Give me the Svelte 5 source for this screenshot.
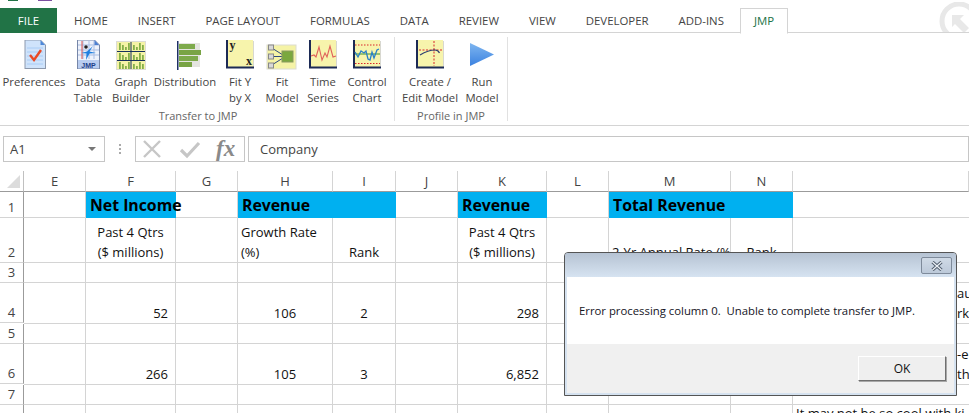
<script>
  const tabs = ['HOME', 'INSERT', 'PAGE LAYOUT', 'FORMULAS', 'DATA', 'REVIEW', 'VIEW', 'DEVELOPER', 'ADD-INS'];

  const columns = ['E', 'F', 'G', 'H', 'I', 'J', 'K', 'L', 'M', 'N', 'O'];

  const transfer = [
    { lines: ['Preferences'], icon: prefs, w: 64 },
    { lines: ['Data', 'Table'], icon: dataTable, w: 44 },
    { lines: ['Graph', 'Builder'], icon: graph, w: 42 },
    { lines: ['Distribution'], icon: dist, w: 66 },
    { lines: ['Fit Y', 'by X'], icon: fitY, w: 44 },
    { lines: ['Fit', 'Model'], icon: fitModel, w: 40 },
    { lines: ['Time', 'Series'], icon: timeSeries, w: 42 },
    { lines: ['Control', 'Chart'], icon: control, w: 46 }
  ];
  const profile = [
    { lines: ['Create /', 'Edit Model'], icon: profiler, w: 70 },
    { lines: ['Run', 'Model'], icon: run, w: 34 }
  ];

  // one entry per sheet row, cells keyed by column letter
  const rows = [
    { n: 1, h: 26, cells: { F: { t: 'Net Income', head: 1 }, H: { t: 'Revenue', head: 1, span: 2 }, K: { t: 'Revenue', head: 1 }, M: { t: 'Total Revenue', head: 1, span: 2 } } },
    {
      n: 2, h: 45, cells: {
        F: { t: ['Past 4 Qtrs', '($ millions)'], c: 1 },
        H: { t: ['Growth Rate', '(%)'] },
        I: { t: 'Rank', c: 1 },
        K: { t: ['Past 4 Qtrs', '($ millions)'], c: 1 },
        M: { t: '2-Yr Annual Rate (%)', clip: 1 },
        N: { t: 'Rank', c: 1 }
      }
    },
    { n: 3, h: 20, cells: {} },
    {
      n: 4, h: 40, cells: {
        F: { t: '52', r: 1 }, H: { t: '106', c: 1 }, I: { t: '2', c: 1 }, K: { t: '298', r: 1 },
        O: { t: ['au', 'rk'], frag: 1 }
      }
    },
    { n: 5, h: 20, cells: {} },
    {
      n: 6, h: 40, cells: {
        F: { t: '266', r: 1 }, H: { t: '105', c: 1 }, I: { t: '3', c: 1 }, K: { t: '6,852', r: 1 },
        O: { t: ['-e', 'th'], frag: 1 }
      }
    },
    { n: 7, h: 20, cells: {} },
    { n: 8, h: 40, cells: { O: { t: 'It may not be so cool with ki', top: 1 } } }
  ];

  function hidden(row, col) {
    // columns swallowed by a merged cell on the left
    const i = columns.indexOf(col);
    return i > 0 && row.cells[columns[i - 1]]?.span === 2;
  }
</script>

{#snippet panel()}
  <rect x="3" y="3" width="27" height="27" fill="#d8d8d0" />
  <rect x="3" y="2" width="26" height="27" fill="#f7f4ac" />
  <rect x="2" y="2" width="2" height="28" fill="#1c2a55" />
  <rect x="2" y="28.5" width="28" height="2" fill="#1c2a55" />
{/snippet}

{#snippet prefs()}
  <path d="M6.5 2H23l5 5v24H6.5z" fill="#8d99ad" />
  <path d="M7.5 2.500H22.500l4.500 4.500v23H7.500z" fill="#cfe3fb" />
  <path d="M22.500 2v5H27z" fill="#4d88d8" />
  <path d="M9 10h16M9 14h16M9 18h16M9 22h16M9 26h16" stroke="#a9ccf5" stroke-width="1" />
  <path d="M12 17l4 5 7-10" fill="none" stroke="#ea4a26" stroke-width="2.400" />
{/snippet}

{#snippet dataTable()}
  <path d="M5 2H23l5 5v24H5z" fill="#7686a8" />
  <path d="M6 2.500H22.500l4.500 4.500v23H6z" fill="#eef2fb" />
  <path d="M6 7h21M6 12h21M6 17h21M11 3v18M17 3v18M22 3v18" stroke="#a9bde3" stroke-width="1" />
  <path d="M10 3v18" stroke="#e0524a" stroke-width="1" />
  <rect x="6" y="22" width="21" height="8.500" fill="#b9cdf0" />
  <path d="M22.500 2v5H27z" fill="#4d7fd0" />
  <circle cx="14" cy="9" r="1.800" fill="#222" />
  <path d="M21 8l-3.500 5.500L24 15l-6.500 .5L14 22l.5-6.500L9 15l6-1.500z" fill="#1f7fe0" />
  <text x="16.500" y="29.500" text-anchor="middle" class="jmp">JMP</text>
{/snippet}

{#snippet graph()}
  <rect x="1" y="3" width="30" height="29" fill="#dcdcd6" />
  <rect x="2" y="4" width="28" height="27" fill="#f5f3a6" />
  {#each [5, 15, 24] as y}
    {#each [4, 7, 10, 13, 18, 21, 24, 27] as x, i}
      <rect x={x} y={y + (i % 3) * 2} width="1.800" height={7 - (i % 3) * 2} fill="#86b04a" />
    {/each}
  {/each}
  <path d="M2 13.500h28M2 22.500h28M16 4v27" stroke="#17305c" stroke-width="1" />
{/snippet}

{#snippet dist()}
  <rect x="10" y="5" width="21" height="24" fill="#e4e4e0" />
  <rect x="8" y="3" width="1.500" height="29" fill="#1d2f66" />
  <rect x="10" y="6" width="16" height="5" fill="#7eaa4c" />
  <rect x="10" y="12" width="24" height="5" fill="#79a445" />
  <rect x="10" y="18" width="19" height="5" fill="#7eaa4c" />
  <rect x="10" y="24" width="13" height="5" fill="#79a445" />
{/snippet}

{#snippet fitY()}
  {@render panel()}
  <text x="5.500" y="11" class="axis">y</text>
  <text x="22" y="27" class="axis">x</text>
{/snippet}

{#snippet fitModel()}
  <rect x="1" y="7" width="29" height="24" fill="#f5f3a6" stroke="#dcdcd0" />
  <path d="M5 9.500L17 17M5 18.500H17M5 27.500L17 20" stroke="#2e4a80" stroke-width="1" />
  <rect x="16" y="13" width="11" height="11" fill="#7aa83e" stroke="#8a9a60" />
  <rect x="2.500" y="7" width="5" height="5" fill="#d8d8d8" stroke="#888" />
  <rect x="2.500" y="16" width="5" height="5" fill="#d8d8d8" stroke="#888" />
  <rect x="2.500" y="25" width="5" height="5" fill="#d8d8d8" stroke="#888" />
{/snippet}

{#snippet timeSeries()}
  {@render panel()}
  <path d="M4 18l3-1 2 2 3-10 3 13 3-7 2 4 3-11 3 11 3-1" fill="none" stroke="#e0605a" stroke-width="1.100" />
{/snippet}

{#snippet control()}
  {@render panel()}
  <path d="M4 7h25M4 25.500h25" stroke="#d8262c" stroke-width="1" stroke-dasharray="1.500 1.500" />
  <path d="M4 16h25" stroke="#3d9132" stroke-width="1" />
  <path d="M4 14l3 5 3-6 3 2 2-2 2 8 2 1 2-8 2 6 3-8 2-1" fill="none" stroke="#2a80c8" stroke-width="1.300" />
{/snippet}

{#snippet profiler()}
  {@render panel()}
  <path d="M5 12h24" stroke="#d8262c" stroke-width="1" stroke-dasharray="2 1.500" />
  <path d="M20 3v25" stroke="#d8262c" stroke-width="1" stroke-dasharray="2 1.500" />
  <path d="M6 17c5-3 11-5 15-5 3 0 3.500 1 4.500 3" fill="none" stroke="#2e3f70" stroke-width="1.200" />
{/snippet}

{#snippet run()}
  <defs>
    <linearGradient id="runFill" x1="0" y1="0" x2="0" y2="1">
      <stop offset="0" stop-color="#7fb6f0" />
      <stop offset="1" stop-color="#3b82e0" />
    </linearGradient>
  </defs>
  <path d="M4 5l24 11.500L4 28z" fill="url(#runFill)" />
{/snippet}

{#snippet ribbonButton(b)}
  <div class="rbtn" style="width: {b.w}px">
    <svg viewBox="0 0 32 32" width="32" height="32">{@render b.icon()}</svg>
    {#each b.lines as line}
      <span>{line}</span>
    {/each}
  </div>
{/snippet}

<div class="window">
  <div class="titlebar">
    <i class="qa-green"></i>
    <i class="qa-purple"></i>
  </div>

  <div class="tabs">
    <div class="tab file">FILE</div>
    {#each tabs as tab}
      <div class="tab">{tab}</div>
    {/each}
    <div class="tab active">JMP</div>
    <svg class="signin" viewBox="0 0 32 30" width="32" height="30">
      <circle cx="22" cy="19" r="17" fill="none" stroke="#e8e8e8" stroke-width="5" />
      <path d="M15 13h12l-4 4 9 9-5 5-9-9-3 3z" fill="#e8e8e8" />
    </svg>
  </div>

  <div class="ribbon">
    <div class="group">
      <div class="buttons first">
        {#each transfer as b}
          {@render ribbonButton(b)}
        {/each}
      </div>
      <div class="group-label">Transfer to JMP</div>
    </div>
    <div class="group">
      <div class="buttons">
        {#each profile as b}
          {@render ribbonButton(b)}
        {/each}
      </div>
      <div class="group-label">Profile in JMP</div>
    </div>
  </div>

  <div class="formula">
    <div class="namebox">
      <span>A1</span>
      <i class="arrow"></i>
    </div>
    <div class="grip"></div>
    <div class="fxbox">
      <svg viewBox="0 0 20 20" width="20" height="20"><path d="M2 2l16 16M18 2L2 18" stroke="#c6c6c6" stroke-width="2.400" fill="none" /></svg>
      <svg viewBox="0 0 22 20" width="22" height="20"><path d="M2 11l6 6L20 4" stroke="#c6c6c6" stroke-width="3.200" fill="none" /></svg>
      <span class="fx">fx</span>
    </div>
    <div class="input">Company</div>
  </div>

  <div class="sheet">
    <div class="corner"><i></i></div>
    {#each columns as col}
      <div class="colhead">{col === 'O' ? '' : col}</div>
    {/each}

    {#each rows as row}
      <div class="rowhead" style="height: {row.h}px">{row.n}</div>
      {#each columns as col}
        {#if !hidden(row, col)}
          {@const cell = row.cells[col]}
          <div
            class="cell"
            class:head={cell?.head}
            class:center={cell?.c}
            class:right={cell?.r}
            class:clip={cell?.clip}
            class:frag={cell?.frag}
            class:top={cell?.top}
            class:noline={col === 'O'}
            style={cell?.span ? 'grid-column: span 2' : ''}
          >
            {#if cell}
              <div class="inner">
                {#each [cell.t].flat() as line}
                  <div>{line}</div>
                {/each}
              </div>
            {/if}
          </div>
        {/if}
      {/each}
    {/each}
  </div>

  <div class="dialog">
    <div class="dialog-title">
      <button class="close" aria-label="Close">
        <svg viewBox="0 0 12 10" width="12" height="10">
          <path d="M1.500 1l9 8M10.500 1l-9 8" stroke="#4f5c6c" stroke-width="3.200" />
          <path d="M1.500 1l9 8M10.500 1l-9 8" stroke="#eef3f8" stroke-width="1.200" />
        </svg>
      </button>
    </div>
    <div class="dialog-body">Error processing column 0.&nbsp; Unable to complete transfer to JMP.</div>
    <div class="dialog-foot">
      <button class="ok">OK</button>
    </div>
  </div>
</div>

<style>
  :global(body) {
    margin: 0;
    background: #fff;
    font-family: "Open Sans", "Noto Sans", sans-serif;
    overflow: hidden;
  }

  .window {
    position: relative;
    width: 969px;
    height: 413px;
    overflow: hidden;
    color: #444;
  }

  .titlebar {
    height: 8px;
    display: flex;
  }

  .qa-green {
    width: 10px;
    height: 1px;
    margin-left: 8px;
    background: #217346;
  }

  .qa-purple {
    width: 14px;
    height: 1px;
    margin-left: 20px;
    background: #7b4fa0;
  }

  .tabs {
    display: flex;
    height: 24px;
    border-bottom: 1px solid #d4d4d4;
    position: relative;
  }

  .tab {
    padding: 0 15px;
    font-size: 11.4px;
    line-height: 25px;
    color: #444;
    white-space: nowrap;
  }

  .tab.file {
    width: 57px;
    box-sizing: border-box;
    padding: 0;
    margin-right: 2px;
    height: 25px;
    text-align: center;
    background: #217346;
    color: #fff;
  }

  .tab.active {
    height: 24px;
    margin-left: 1px;
    color: #217346;
    background: #fff;
    border: 1px solid #d4d4d4;
    border-bottom: 1px solid #fff;
    padding: 0 13px;
    line-height: 24px;
  }

  .signin {
    position: absolute;
    right: 0;
    top: -6px;
  }

  .ribbon {
    display: flex;
    height: 92px;
    padding-left: 2px;
    border-bottom: 1px solid #d4d4d4;
  }

  .group {
    display: flex;
    flex-direction: column;
    align-items: center;
    border-right: 1px solid #e1e1e1;
    height: 84px;
    margin-top: 4px;
  }

  .buttons {
    display: flex;
    flex: none;
  }

  .buttons.first {
    padding-right: 4px;
  }

  .buttons:not(.first) {
    padding-right: 8px;
  }

  .rbtn {
    display: flex;
    flex-direction: column;
    align-items: center;
    font-size: 11.3px;
    line-height: 16px;
    color: #444;
    white-space: nowrap;
  }

  .rbtn svg {
    margin-top: 1px;
    margin-bottom: 4px;
    flex: none;
  }

  .group-label {
    font-size: 11px;
    line-height: 16px;
    color: #666;
    margin-top: 2px;
  }

  .jmp {
    font: bold 7px "Liberation Sans", sans-serif;
    fill: #1d3f8a;
  }

  .axis {
    font: bold 12px "Liberation Serif", serif;
    fill: #222;
  }

  .formula {
    display: flex;
    height: 26px;
    margin-top: 10px;
    padding-left: 3px;
  }

  .namebox,
  .fxbox,
  .input {
    box-sizing: border-box;
    border: 1px solid #c6c6c6;
    height: 26px;
    display: flex;
    align-items: center;
    font-size: 13px;
    color: #444;
  }

  .namebox {
    width: 102px;
    padding: 0 5px 0 6px;
    justify-content: space-between;
  }

  .arrow {
    width: 0;
    height: 0;
    border: 4px solid transparent;
    border-top: 4px solid #777;
    border-bottom: 0;
    margin-right: 3px;
  }

  .grip {
    width: 2px;
    height: 10px;
    margin: 8px 14px 0 14px;
    background: repeating-linear-gradient(#aaa 0 2px, transparent 2px 4px);
  }

  .fxbox {
    width: 110px;
    padding-left: 6px;
    gap: 17px;
  }

  .fxbox svg {
    flex: none;
  }

  .fx {
    font: italic bold 23px "Liberation Serif", serif;
    color: #8a8a8a;
    line-height: 20px;
    margin-left: -2px;
  }

  .input {
    flex: 1;
    margin-left: 3px;
    padding-left: 11px;
  }

  .sheet {
    display: grid;
    grid-template-columns: 24px 62px 90px 62px 95px 63px 62px 89px 62px 122px 62px 176px;
    margin-top: 9px;
    font-size: 13px;
    color: #111;
  }

  .corner {
    height: 20px;
    border-bottom: 1px solid #9b9b9b;
    border-right: 1px solid #c0c0c0;
    position: relative;
    width: 23px;
  }

  .corner i {
    position: absolute;
    left: 7px;
    bottom: 3px;
    width: 0;
    height: 0;
    border-left: 13px solid transparent;
    border-bottom: 13px solid #dcdcdc;
  }

  .colhead {
    height: 20px;
    line-height: 20px;
    text-align: center;
    color: #444;
    border-right: 1px solid #d4d4d4;
    border-bottom: 1px solid #9b9b9b;
  }

  .rowhead {
    box-sizing: border-box;
    border-right: 1px solid #9b9b9b;
    border-bottom: 1px solid #d4d4d4;
    color: #444;
    text-align: center;
    display: flex;
    align-items: flex-end;
    justify-content: center;
    line-height: 20px;
  }

  .cell {
    box-sizing: border-box;
    min-width: 0;
    border-right: 1px solid #d4d4d4;
    border-bottom: 1px solid #d4d4d4;
    display: flex;
    align-items: flex-end;
    line-height: 20px;
    padding: 0 3px;
    white-space: nowrap;
  }

  .cell .inner {
    width: 100%;
  }

  .cell.noline {
    border-right: 0;
  }

  .cell.head {
    background: #00b0f0;
    font-size: 15.8px;
    font-weight: 700;
    color: #000;
    border: 0;
    line-height: 25px;
    padding-left: 4px;
    position: relative;
  }

  .center {
    text-align: center;
  }

  .right {
    text-align: right;
    padding-right: 7px;
  }

  .clip {
    overflow: hidden;
  }

  .frag {
    padding-left: 164px;
    padding-right: 0;
  }

  .top {
    align-items: flex-start;
    border-bottom: 0;
  }

  .top .inner {
    margin-top: -2px;
  }

  .dialog {
    position: absolute;
    left: 564px;
    top: 252px;
    width: 393px;
    height: 144px;
    box-sizing: border-box;
    border: 1px solid #555;
    border-radius: 4px 4px 0 0;
    background: #d5e2f0;
    padding: 0 2px 2px;
    display: flex;
    flex-direction: column;
  }

  .dialog-title {
    height: 24px;
    margin: 0 -2px;
    background: linear-gradient(#b6c3d3, #d6e3f1);
    border-radius: 3px 3px 0 0;
    display: flex;
    justify-content: flex-end;
    align-items: flex-start;
    padding: 4px 4px 0 0;
    box-sizing: border-box;
  }

  .close {
    width: 31px;
    height: 17px;
    padding: 0;
    border: 1px solid #7e8a9a;
    border-radius: 2px;
    background: linear-gradient(#d0dae6, #bcc9d9);
    display: flex;
    align-items: center;
    justify-content: center;
  }

  .dialog-body {
    height: 67px;
    background: #fff;
    color: #14141e;
    font-size: 11.33px;
    line-height: 67px;
    padding-left: 12px;
    white-space: nowrap;
  }

  .dialog-foot {
    flex: 1;
    background: #f0f0f0;
    display: flex;
    justify-content: flex-end;
    align-items: flex-start;
    padding: 12px 8px 0 0;
  }

  .ok {
    width: 88px;
    height: 25px;
    padding: 0;
    box-sizing: border-box;
    background: #efefef;
    border: 1px solid;
    border-color: #fff #6f6f6f #6f6f6f #fff;
    box-shadow: 1px 1px 0 #a8a8a8;
    font: 12px "Open Sans", sans-serif;
    color: #111;
  }
</style>
